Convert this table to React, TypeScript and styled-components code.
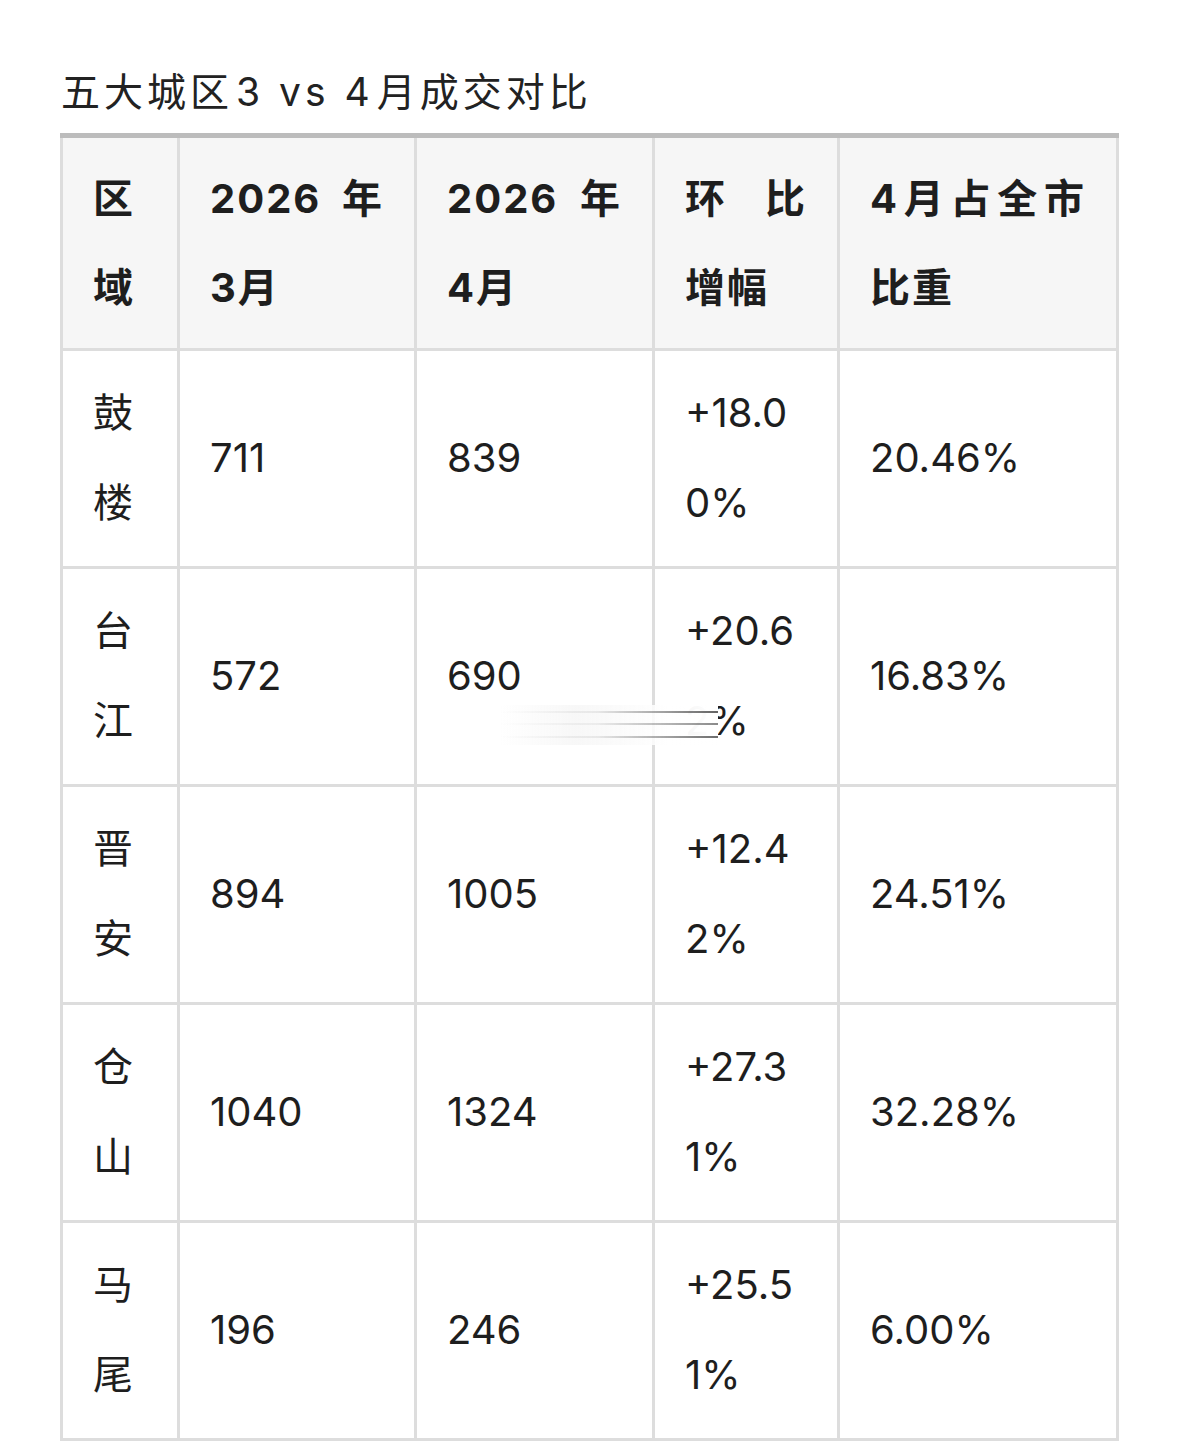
import React from "react";
import styled, { createGlobalStyle } from "styled-components";

const GlobalStyle = createGlobalStyle`
  html, body {
    margin: 0;
    padding: 0;
    background: #ffffff;
  }
  body {
    font-family: Inter, "Noto Sans CJK SC", sans-serif;
    color: #1e1e1e;
  }
`;

const Page = styled.div`
  width: 1179px;
  box-sizing: border-box;
  padding: 66px 0 0 60px;
`;

const Title = styled.h2`
  margin: 0 0 15px 1px;
  font-size: 39px;
  font-weight: 400;
  line-height: 52px;
  letter-spacing: 4px;
  color: #222222;
`;

const Latin = styled.span`
  margin: 0 3px;
`;

const TableWrap = styled.div`
  position: relative;
  width: 1056px;
`;

const Table = styled.table`
  width: 1056px;
  border-collapse: collapse;
  table-layout: fixed;
  border-top: 5px solid #bcbcbc;
`;

const Col = styled.col<{ $w: number }>`
  width: ${(p) => p.$w}px;
`;

const HeadCell = styled.th`
  background: #f6f6f6;
  border: 3px solid #dddddd;
  border-top: 5px solid #bcbcbc;
  padding: 16px 30px 16px 30px;
  font-size: 40px;
  font-weight: 700;
  line-height: 89px;
  letter-spacing: 2px;
  text-align: justify;
  vertical-align: middle;
  word-break: break-all;
  color: #1e1e1e;
`;

const BodyCell = styled.td`
  border: 3px solid #dddddd;
  padding: 17px 30px 18px 30px;
  font-size: 40px;
  font-weight: 400;
  line-height: 90px;
  letter-spacing: 0;
  text-align: left;
  vertical-align: middle;
  word-break: break-all;
  color: #1e1e1e;
`;

const Smear = styled.div`
  position: absolute;
  left: 440px;
  top: 572px;
  width: 218px;
  height: 40px;
  pointer-events: none;
  background:
    linear-gradient(to right, rgba(150, 150, 150, 0) 0%, rgba(150, 150, 150, 0.18) 45%, rgba(60, 60, 60, 0.8) 100%) 0 6px / 100% 2px no-repeat,
    linear-gradient(to right, rgba(150, 150, 150, 0) 0%, rgba(150, 150, 150, 0.14) 45%, rgba(60, 60, 60, 0.6) 100%) 0 18px / 100% 2px no-repeat,
    linear-gradient(to right, rgba(150, 150, 150, 0) 0%, rgba(150, 150, 150, 0.18) 45%, rgba(60, 60, 60, 0.75) 100%) 0 31px / 100% 2px no-repeat,
    linear-gradient(to right, rgba(235, 235, 235, 0) 0%, rgba(240, 240, 240, 0.5) 35%, rgba(255, 255, 255, 0.95) 78%, #ffffff 100%);
  filter: blur(0.7px);
`;

const headers = ["区域", "2026年3月", "2026年4月", "环比增幅", "4月占全市比重"];

const rows: [string, string, string, string, string][] = [
  ["鼓楼", "711", "839", "+18.00%", "20.46%"],
  ["台江", "572", "690", "+20.62%", "16.83%"],
  ["晋安", "894", "1005", "+12.42%", "24.51%"],
  ["仓山", "1040", "1324", "+27.31%", "32.28%"],
  ["马尾", "196", "246", "+25.51%", "6.00%"],
];

const widths = [117, 237, 238, 185, 279];

export default function App() {
  return (
    <>
      <GlobalStyle />
      <Page>
        <Title>
          五大城区<Latin>3 vs 4</Latin>月成交对比
        </Title>
        <TableWrap>
          <Table>
            <colgroup>
              {widths.map((w, i) => (
                <Col key={i} $w={w} />
              ))}
            </colgroup>
            <thead>
              <tr>
                {headers.map((h) => (
                  <HeadCell key={h}>{h}</HeadCell>
                ))}
              </tr>
            </thead>
            <tbody>
              {rows.map((r) => (
                <tr key={r[0]}>
                  {r.map((c, i) => (
                    <BodyCell key={i}>{c}</BodyCell>
                  ))}
                </tr>
              ))}
            </tbody>
          </Table>
          <Smear />
        </TableWrap>
      </Page>
    </>
  );
}
